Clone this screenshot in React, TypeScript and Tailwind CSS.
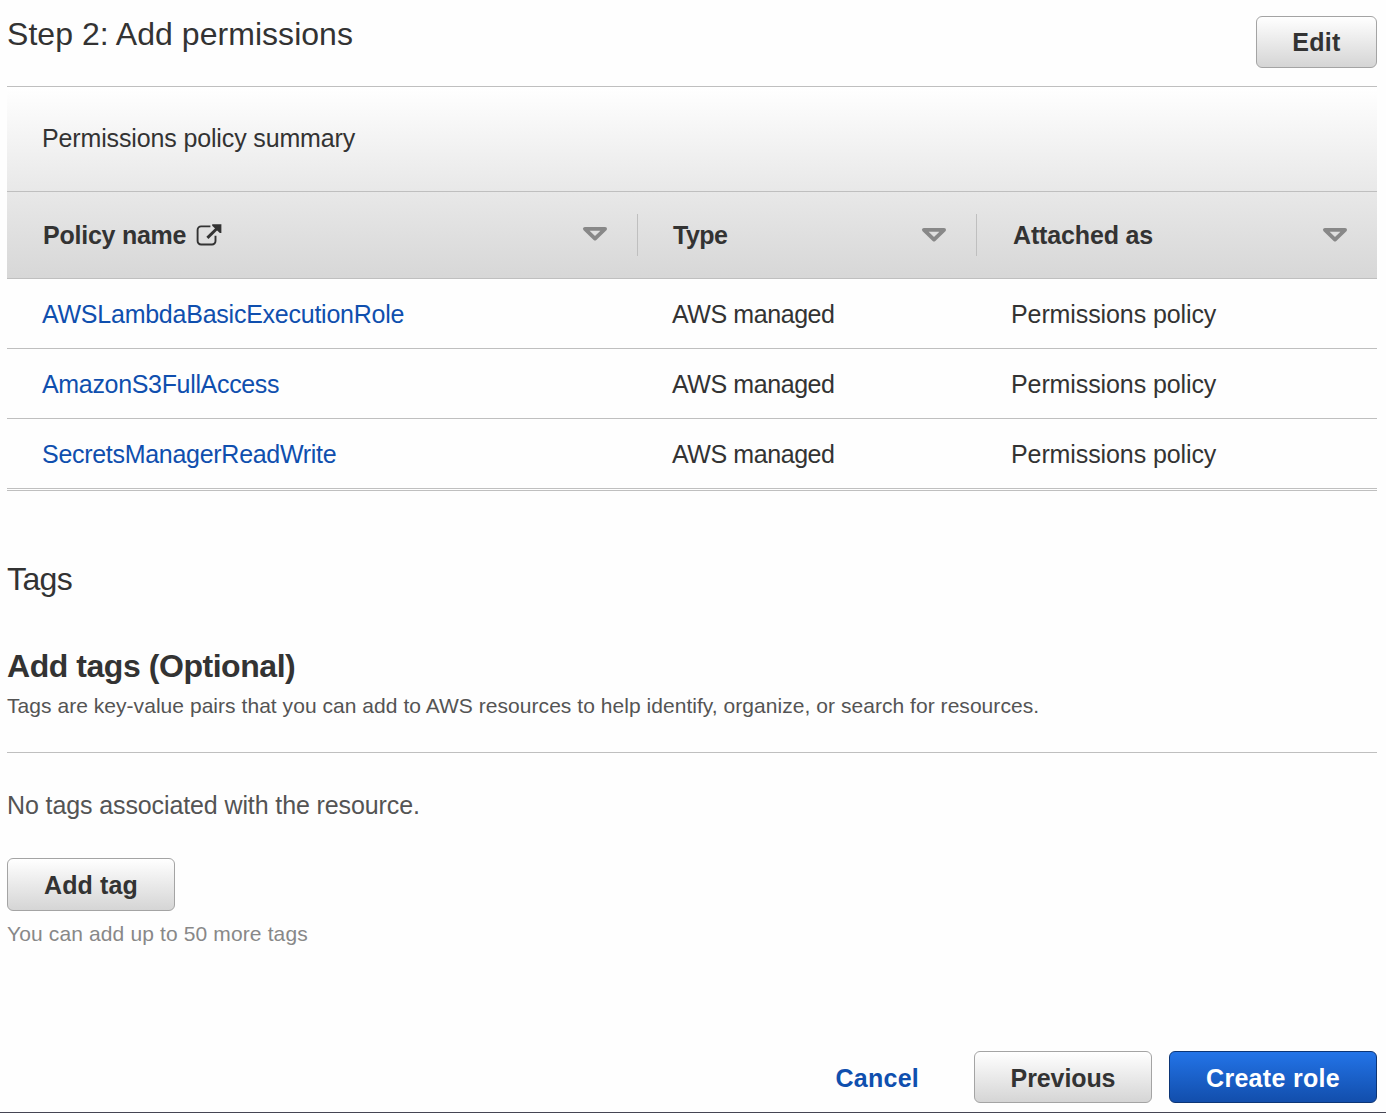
import type { ReactNode } from "react";

const policies = [
  { name: "AWSLambdaBasicExecutionRole", tracking: "tracking-[-0.24px]" },
  { name: "AmazonS3FullAccess", tracking: "tracking-[-0.33px]" },
  { name: "SecretsManagerReadWrite", tracking: "tracking-[-0.29px]" },
];

const columns = "grid grid-cols-[630px_339px_1fr]";

function SortIcon({ className }: { className: string }) {
  return (
    <svg className={className} width="26" height="16" viewBox="0 0 26 16" fill="none">
      <path d="M2.9 2.8H23.1L13 12.6Z" stroke="#888" strokeWidth="3.8" strokeLinejoin="round" />
    </svg>
  );
}

function ExternalIcon() {
  return (
    <svg className="ml-[10px]" width="26" height="24" viewBox="0 0 26 24" fill="none">
      <path
        d="M14.4 3.4H5.1A3.5 3.5 0 0 0 1.6 6.9V18A3.5 3.5 0 0 0 5.1 21.5H16A3.5 3.5 0 0 0 19.5 18V12.8"
        stroke="#333"
        strokeWidth="1.9"
      />
      <path d="M11.4 14.8L21.5 5" stroke="#333" strokeWidth="3" />
      <path d="M16.2 1.2H25.4V10H23.8L16.2 2.8Z" fill="#333" />
    </svg>
  );
}

function Button({ className, children }: { className: string; children: ReactNode }) {
  return (
    <button
      className={`flex items-center justify-center rounded-[6px] border text-[25px] font-bold leading-none ${className}`}
    >
      {children}
    </button>
  );
}

const grayButton = "border-[#a4a4a4] bg-linear-to-b from-white to-[#d5d5d5] text-[#333]";

export default function App() {
  return (
    <div className="flex h-[1113px] w-[1386px] flex-col overflow-hidden border-b border-[#454553] bg-[#fefefe] pl-[7px] pr-[9px] font-['Liberation_Sans',Arial,sans-serif] text-[#333]">
      <header className="flex h-[86px] items-start justify-between">
        <h1 className="mt-[15px] text-[32px] leading-[38px] tracking-[0.04px]">Step 2: Add permissions</h1>
        <Button className={`mt-4 h-[52px] w-[121px] tracking-[0.3px] ${grayButton}`}>Edit</Button>
      </header>

      <section className="border-t border-[#bfbfbf] text-[25px]">
        <div className="flex h-[105px] items-center border-b border-[#bfbfbf] bg-linear-to-b from-white to-[#e8e8e8] pl-[35px] tracking-[-0.14px]">
          Permissions policy summary
        </div>
        <div
          className={`${columns} h-[87px] items-center border-b border-[#bfbfbf] bg-linear-to-b from-[#e8e8e8] to-[#d7d7d7] font-bold`}
        >
          <div className="flex h-[42px] items-center pl-[36px]">
            <span className="pt-[2px] tracking-[-0.24px]">Policy name</span>
            <ExternalIcon />
            <SortIcon className="ml-auto mr-[29px] mt-[-3px]" />
          </div>
          <div className="flex h-[42px] items-center border-l border-[#bfbfbf] pl-[35px]">
            <span className="pt-[2px] tracking-[-0.5px]">Type</span>
            <SortIcon className="ml-auto mr-[29px] mt-[-1px]" />
          </div>
          <div className="flex h-[42px] items-center border-l border-[#bfbfbf] pl-[36px]">
            <span className="pt-[2px] tracking-[-0.15px]">Attached as</span>
            <SortIcon className="ml-auto mr-[29px] mt-[-1px]" />
          </div>
        </div>
        {policies.map((p) => (
          <div key={p.name} className={`${columns} h-[70px] items-center border-b border-[#bfbfbf] pt-[2px]`}>
            <a className={`pl-[35px] text-[#0f4fae] ${p.tracking}`}>{p.name}</a>
            <span className="pl-[35px] tracking-[-0.42px]">AWS managed</span>
            <span className="pl-[35px] tracking-[-0.1px]">Permissions policy</span>
          </div>
        ))}
        <div className="h-[2px] border-b border-[#bfbfbf]" />
      </section>

      <section>
        <h2 className="mt-[69px] text-[32px] leading-[38px] tracking-[-0.6px]">Tags</h2>
        <h3 className="mt-[49px] text-[32px] font-bold leading-[38px] tracking-[-0.45px]">Add tags (Optional)</h3>
        <p className="mt-[6px] text-[21px] leading-[30px] tracking-[0.044px] text-[#545454]">
          Tags are key-value pairs that you can add to AWS resources to help identify, organize, or search for
          resources.
        </p>
        <hr className="mt-[31px] border-t border-[#bfbfbf]" />
        <p className="mb-[37px] mt-[36px] text-[25px] leading-[32px] tracking-[-0.11px] text-[#545454]">
          No tags associated with the resource.
        </p>
        <Button className={`h-[53px] w-[168px] pt-[2px] tracking-[0.15px] ${grayButton}`}>Add tag</Button>
        <p className="mt-[8px] text-[21px] leading-[30px] tracking-[0.13px] text-[#888]">
          You can add up to 50 more tags
        </p>
      </section>

      <footer className="mb-[9px] mt-auto flex items-center justify-end">
        <a className="mr-[55px] pt-[2px] text-[25px] font-bold leading-none tracking-[0.25px] text-[#0f4fae]">
          Cancel
        </a>
        <Button className={`mr-[17px] h-[52px] w-[178px] pt-[2px] tracking-[-0.1px] ${grayButton}`}>Previous</Button>
        <Button className="h-[52px] w-[208px] border-[#0c3576] bg-linear-to-b from-[#2374e8] to-[#124eac] pt-[2px] tracking-[0.3px] text-white">
          Create role
        </Button>
      </footer>
    </div>
  );
}
